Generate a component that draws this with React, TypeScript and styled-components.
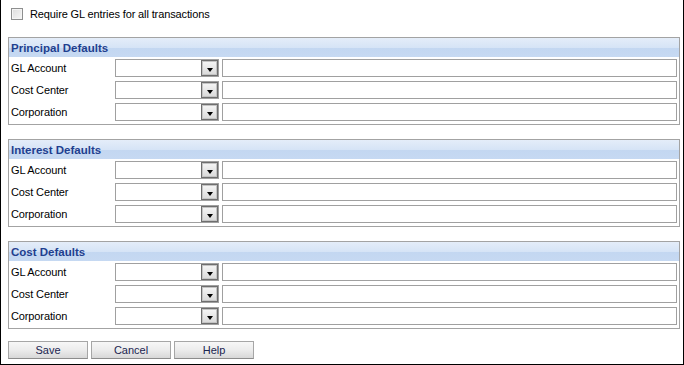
import styled, { createGlobalStyle } from "styled-components";

const GlobalStyle = createGlobalStyle`
    html, body {
        margin: 0;
        padding: 0;
        background: #ffffff;
    }
    body {
        font-family: "Liberation Sans", Arial, sans-serif;
        font-size: 11px;
        letter-spacing: -0.12px;
        color: #000;
    }
`;

const Page = styled.div`
    width: 684px;
    height: 365px;
    box-sizing: border-box;
    border: 1px solid #000;
    border-top: none;
    padding: 0 3px 0 7px;
    display: flex;
    flex-direction: column;
`;

const CheckRow = styled.label`
    display: flex;
    align-items: center;
    height: 12px;
    margin: 8px 0 17px 3px;
    gap: 7px;
`;

const CheckBox = styled.span`
    width: 12px;
    height: 12px;
    box-sizing: border-box;
    border: 1px solid #8e8f8f;
    background: linear-gradient(135deg, #dcdcdc 0%, #ececec 60%, #f6f6f6 100%);
    box-shadow: inset 0 0 0 1px #f4f4f4;
`;

const Fieldsets = styled.div`
    display: flex;
    flex-direction: column;
    gap: 14px;
`;

const Fieldset = styled.section`
    height: 88px;
    box-sizing: border-box;
    border: 1px solid #a3a3a3;
    display: flex;
    flex-direction: column;
`;

const Legend = styled.div`
    height: 19px;
    display: flex;
    align-items: center;
    padding-left: 2px;
    font-weight: bold;
    font-size: 11.5px;
    letter-spacing: 0;
    color: #1f3f8f;
    background: linear-gradient(#e4edf9 0%, #d6e4f6 50%, #c3d7f1 52%, #c6d9f2 100%);
`;

const Rows = styled.div`
    display: flex;
    flex-direction: column;
    gap: 4px;
    padding: 2px 2px 0 2px;
`;

const Row = styled.div`
    display: grid;
    grid-template-columns: 104px 104px 1fr;
    height: 18px;
    align-items: center;
`;

const Label = styled.span`
    white-space: nowrap;
`;

const Select = styled.div`
    height: 18px;
    box-sizing: border-box;
    border: 1px solid #a0a0a0;
    background: #fff;
    display: flex;
    justify-content: flex-end;
`;

const DropButton = styled.span`
    width: 17px;
    height: 16px;
    box-sizing: border-box;
    border: 1px solid #6e6e6e;
    box-shadow: inset 0 0 0 1px #c4c4c4;
    background: linear-gradient(#f6f6f6, #d9d9d9);
    display: flex;
    align-items: center;
    justify-content: center;
    padding-top: 3px;
    &::after {
        content: "";
        width: 0;
        height: 0;
        border-left: 3.5px solid transparent;
        border-right: 3.5px solid transparent;
        border-top: 4px solid #000;
    }
`;

const TextInput = styled.div`
    height: 18px;
    box-sizing: border-box;
    border: 1px solid #a0a0a0;
    background: #fff;
    margin-left: 3px;
`;

const Buttons = styled.div`
    display: flex;
    gap: 3px;
    margin-top: 12px;
`;

const Button = styled.button`
    width: 80px;
    height: 18px;
    box-sizing: border-box;
    border: 1px solid #a6a6a6;
    border-bottom-color: #8c8c8c;
    background: linear-gradient(#f7f7f7 0%, #ececec 50%, #d8d8d8 100%);
    font-family: "Liberation Sans", Arial, sans-serif;
    font-size: 11px;
    color: #1b2550;
    padding: 0;
    cursor: pointer;
`;

const sections = ["Principal Defaults", "Interest Defaults", "Cost Defaults"];
const fields = ["GL Account", "Cost Center", "Corporation"];

export default function App() {
    return (
        <>
            <GlobalStyle />
            <Page>
                <CheckRow>
                    <CheckBox />
                    <span>Require GL entries for all transactions</span>
                </CheckRow>
                <Fieldsets>
                    {sections.map((s) => (
                        <Fieldset key={s}>
                            <Legend>{s}</Legend>
                            <Rows>
                                {fields.map((f) => (
                                    <Row key={f}>
                                        <Label>{f}</Label>
                                        <Select>
                                            <DropButton />
                                        </Select>
                                        <TextInput />
                                    </Row>
                                ))}
                            </Rows>
                        </Fieldset>
                    ))}
                </Fieldsets>
                <Buttons>
                    <Button>Save</Button>
                    <Button>Cancel</Button>
                    <Button>Help</Button>
                </Buttons>
            </Page>
        </>
    );
}
